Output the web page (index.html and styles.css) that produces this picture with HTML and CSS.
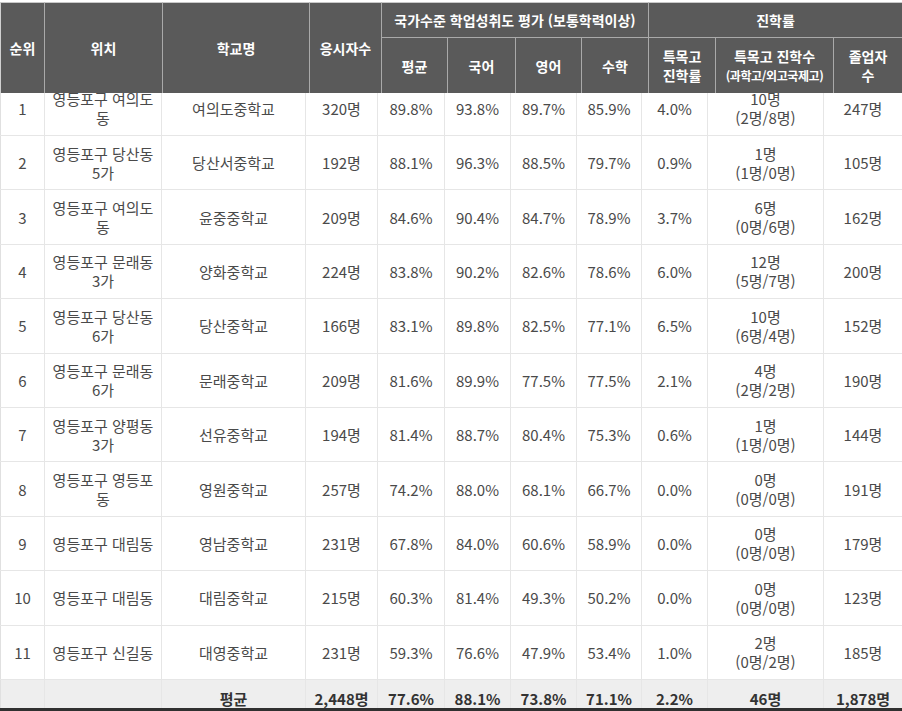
FILE: index.html
```html
<!DOCTYPE html>
<html lang="ko">
<head>
<meta charset="utf-8">
<title>영등포구 중학교 학업성취도</title>
<link rel="stylesheet" href="styles.css">
</head>
<body>
<div class="sheet">
  <div class="head">
    <div class="hc first span2"><span>순위</span></div>
    <div class="hc span2"><span>위치</span></div>
    <div class="hc span2"><span>학교명</span></div>
    <div class="hc span2"><span>응시자수</span></div>
    <div class="hc group-a"><span>국가수준 학업성취도 평가 (보통학력이상)</span></div>
    <div class="hc group-b"><span>진학률</span></div>
    <div class="hc sub-row"><span>평균</span></div>
    <div class="hc sub-row"><span>국어</span></div>
    <div class="hc sub-row"><span>영어</span></div>
    <div class="hc sub-row"><span>수학</span></div>
    <div class="hc sub-row"><span>특목고<br>진학률</span></div>
    <div class="hc sub-row"><span>특목고 진학수<br><small class="sub">(과학고/외고국제고)</small></span></div>
    <div class="hc sub-row"><span>졸업자<br>수</span></div>
  </div>
  <div class="clip">
    <div class="rows">
      <div class="row"><div class="c first"><span>1</span></div><div class="c"><span>영등포구 여의도<br>동</span></div><div class="c"><span>여의도중학교</span></div><div class="c"><span>320명</span></div><div class="c"><span>89.8%</span></div><div class="c"><span>93.8%</span></div><div class="c"><span>89.7%</span></div><div class="c"><span>85.9%</span></div><div class="c"><span>4.0%</span></div><div class="c"><span>10명<br>(2명/8명)</span></div><div class="c"><span>247명</span></div></div>
      <div class="row"><div class="c first"><span>2</span></div><div class="c"><span>영등포구 당산동<br>5가</span></div><div class="c"><span>당산서중학교</span></div><div class="c"><span>192명</span></div><div class="c"><span>88.1%</span></div><div class="c"><span>96.3%</span></div><div class="c"><span>88.5%</span></div><div class="c"><span>79.7%</span></div><div class="c"><span>0.9%</span></div><div class="c"><span>1명<br>(1명/0명)</span></div><div class="c"><span>105명</span></div></div>
      <div class="row"><div class="c first"><span>3</span></div><div class="c"><span>영등포구 여의도<br>동</span></div><div class="c"><span>윤중중학교</span></div><div class="c"><span>209명</span></div><div class="c"><span>84.6%</span></div><div class="c"><span>90.4%</span></div><div class="c"><span>84.7%</span></div><div class="c"><span>78.9%</span></div><div class="c"><span>3.7%</span></div><div class="c"><span>6명<br>(0명/6명)</span></div><div class="c"><span>162명</span></div></div>
      <div class="row"><div class="c first"><span>4</span></div><div class="c"><span>영등포구 문래동<br>3가</span></div><div class="c"><span>양화중학교</span></div><div class="c"><span>224명</span></div><div class="c"><span>83.8%</span></div><div class="c"><span>90.2%</span></div><div class="c"><span>82.6%</span></div><div class="c"><span>78.6%</span></div><div class="c"><span>6.0%</span></div><div class="c"><span>12명<br>(5명/7명)</span></div><div class="c"><span>200명</span></div></div>
      <div class="row"><div class="c first"><span>5</span></div><div class="c"><span>영등포구 당산동<br>6가</span></div><div class="c"><span>당산중학교</span></div><div class="c"><span>166명</span></div><div class="c"><span>83.1%</span></div><div class="c"><span>89.8%</span></div><div class="c"><span>82.5%</span></div><div class="c"><span>77.1%</span></div><div class="c"><span>6.5%</span></div><div class="c"><span>10명<br>(6명/4명)</span></div><div class="c"><span>152명</span></div></div>
      <div class="row"><div class="c first"><span>6</span></div><div class="c"><span>영등포구 문래동<br>6가</span></div><div class="c"><span>문래중학교</span></div><div class="c"><span>209명</span></div><div class="c"><span>81.6%</span></div><div class="c"><span>89.9%</span></div><div class="c"><span>77.5%</span></div><div class="c"><span>77.5%</span></div><div class="c"><span>2.1%</span></div><div class="c"><span>4명<br>(2명/2명)</span></div><div class="c"><span>190명</span></div></div>
      <div class="row"><div class="c first"><span>7</span></div><div class="c"><span>영등포구 양평동<br>3가</span></div><div class="c"><span>선유중학교</span></div><div class="c"><span>194명</span></div><div class="c"><span>81.4%</span></div><div class="c"><span>88.7%</span></div><div class="c"><span>80.4%</span></div><div class="c"><span>75.3%</span></div><div class="c"><span>0.6%</span></div><div class="c"><span>1명<br>(1명/0명)</span></div><div class="c"><span>144명</span></div></div>
      <div class="row"><div class="c first"><span>8</span></div><div class="c"><span>영등포구 영등포<br>동</span></div><div class="c"><span>영원중학교</span></div><div class="c"><span>257명</span></div><div class="c"><span>74.2%</span></div><div class="c"><span>88.0%</span></div><div class="c"><span>68.1%</span></div><div class="c"><span>66.7%</span></div><div class="c"><span>0.0%</span></div><div class="c"><span>0명<br>(0명/0명)</span></div><div class="c"><span>191명</span></div></div>
      <div class="row"><div class="c first"><span>9</span></div><div class="c"><span>영등포구 대림동</span></div><div class="c"><span>영남중학교</span></div><div class="c"><span>231명</span></div><div class="c"><span>67.8%</span></div><div class="c"><span>84.0%</span></div><div class="c"><span>60.6%</span></div><div class="c"><span>58.9%</span></div><div class="c"><span>0.0%</span></div><div class="c"><span>0명<br>(0명/0명)</span></div><div class="c"><span>179명</span></div></div>
      <div class="row"><div class="c first"><span>10</span></div><div class="c"><span>영등포구 대림동</span></div><div class="c"><span>대림중학교</span></div><div class="c"><span>215명</span></div><div class="c"><span>60.3%</span></div><div class="c"><span>81.4%</span></div><div class="c"><span>49.3%</span></div><div class="c"><span>50.2%</span></div><div class="c"><span>0.0%</span></div><div class="c"><span>0명<br>(0명/0명)</span></div><div class="c"><span>123명</span></div></div>
      <div class="row"><div class="c first"><span>11</span></div><div class="c"><span>영등포구 신길동</span></div><div class="c"><span>대영중학교</span></div><div class="c"><span>231명</span></div><div class="c"><span>59.3%</span></div><div class="c"><span>76.6%</span></div><div class="c"><span>47.9%</span></div><div class="c"><span>53.4%</span></div><div class="c"><span>1.0%</span></div><div class="c"><span>2명<br>(0명/2명)</span></div><div class="c"><span>185명</span></div></div>
      <div class="row total"><div class="c first"></div><div class="c"></div><div class="c"><span>평균</span></div><div class="c"><span>2,448명</span></div><div class="c"><span>77.6%</span></div><div class="c"><span>88.1%</span></div><div class="c"><span>73.8%</span></div><div class="c"><span>71.1%</span></div><div class="c"><span>2.2%</span></div><div class="c"><span>46명</span></div><div class="c"><span>1,878명</span></div></div>
    </div>
  </div>
  <div class="bar"></div>
</div>
</body>
</html>
```

FILE: styles.css
```css
html, body {
  margin: 0;
  padding: 0;
  background: #ffffff;
}

body {
  font-family: "Noto Sans CJK KR", "Noto Sans", sans-serif;
  overflow: hidden;
}

.sheet {
  width: 902px;
  padding-top: 2px;
}

.head {
  display: grid;
  grid-template-columns: 45px 118px 147px 72px 66px 68px 66px 67px 67px 118px 68px;
  grid-template-rows: 35px 56px;
  background: #5a5a5a;
}

.hc {
  box-sizing: border-box;
  display: flex;
  align-items: center;
  justify-content: center;
  text-align: center;
  color: #ffffff;
  font-weight: 700;
  font-size: 14px;
  line-height: 19px;
  background: #5a5a5a;
  border-right: 1px solid #a9a9a9;
  border-top: 1px solid #c9c9c9;
  white-space: nowrap;
}

.hc.first {
  border-left: 1px solid #d0d0d0;
}

.hc.span2 {
  grid-row: span 2;
}

.hc.group-a {
  grid-column: span 4;
}

.hc.group-b {
  grid-column: span 3;
  border-right: none;
}

.hc.sub-row {
  border-top: 1px solid #a9a9a9;
  padding-top: 1px;
}

.head .hc:last-child {
  border-right: none;
}

.hc .sub {
  font-size: 12px;
  letter-spacing: -0.4px;
}

.clip {
  height: 615px;
  overflow: hidden;
}

.rows {
  margin-top: -11.4px;
}

.row {
  display: grid;
  grid-template-columns: 45px 117px 144px 72px 67px 66px 66px 65px 66px 116px 78px;
  height: 54.4px;
  box-sizing: border-box;
  border-bottom: 1px solid #e6e6e6;
}

.c {
  box-sizing: border-box;
  display: flex;
  align-items: center;
  justify-content: center;
  text-align: center;
  padding: 0 2px;
  font-size: 15px;
  line-height: 19px;
  color: #4a4a4a;
  border-right: 1px solid #e6e6e6;
  white-space: nowrap;
}

.c.first {
  border-left: 1px solid #e0e0e0;
}

.row .c:last-child {
  border-right: none;
}

.row.total {
  height: 36px;
  background: #eeeeee;
  border-bottom: none;
}

.row.total .c {
  color: #333333;
  font-weight: 700;
  padding-top: 2px;
}

.bar {
  height: 3px;
  background: #303030;
}
```
